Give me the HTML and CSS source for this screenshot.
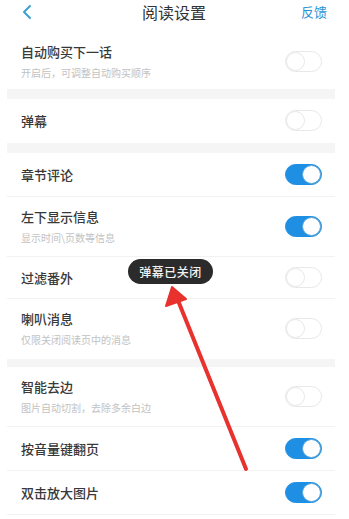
FILE: index.html
```html
<!DOCTYPE html>
<html lang="zh">
<head>
<meta charset="utf-8">
<link rel="stylesheet" href="styles.css">
</head>
<body>
<div class="page">
  <div class="header">
    <svg class="back" width="12" height="16" viewBox="0 0 12 16"><path d="M9 2 L3 8 L9 14" fill="none" stroke="#3aa0d9" stroke-width="2" stroke-linecap="round" stroke-linejoin="round"/></svg>
    <div class="title">阅读设置</div>
    <div class="feedback">反馈</div>
  </div>

  <div class="row two first">
    <div class="text"><div class="name">自动购买下一话</div><div class="sub">开启后，可调整自动购买顺序</div></div>
    <div class="toggle"></div>
  </div>
  <div class="band"></div>
  <div class="row">
    <div class="text"><div class="name">弹幕</div></div>
    <div class="toggle"></div>
  </div>
  <div class="band"></div>
  <div class="row line">
    <div class="text"><div class="name">章节评论</div></div>
    <div class="toggle on"></div>
  </div>
  <div class="row two line">
    <div class="text"><div class="name">左下显示信息</div><div class="sub">显示时间\页数等信息</div></div>
    <div class="toggle on"></div>
  </div>
  <div class="row short line">
    <div class="text"><div class="name">过滤番外</div></div>
    <div class="toggle"></div>
  </div>
  <div class="row two">
    <div class="text"><div class="name">喇叭消息</div><div class="sub">仅限关闭阅读页中的消息</div></div>
    <div class="toggle"></div>
  </div>
  <div class="band thin"></div>
  <div class="row two line">
    <div class="text"><div class="name">智能去边</div><div class="sub">图片自动切割，去除多余白边</div></div>
    <div class="toggle"></div>
  </div>
  <div class="row line">
    <div class="text"><div class="name">按音量键翻页</div></div>
    <div class="toggle on"></div>
  </div>
  <div class="row line">
    <div class="text"><div class="name">双击放大图片</div></div>
    <div class="toggle on"></div>
  </div>
</div>

<div class="toast">弹幕已关闭</div>
<svg class="arrow" width="349" height="519" viewBox="0 0 349 519">
  <line x1="246" y1="469" x2="177" y2="298" stroke="#e8322e" stroke-width="4" stroke-linecap="round"/>
  <polygon points="172,287 166,306 186,299" fill="#e8322e" stroke="#e8322e" stroke-width="2" stroke-linejoin="round"/>
</svg>
</body>
</html>
```

FILE: styles.css
```css
* { box-sizing: border-box; }
html, body { margin: 0; padding: 0; background: #fff; }
body {
  width: 349px;
  height: 519px;
  overflow: hidden;
  position: relative;
  font-family: "Noto Sans CJK SC", "Noto Sans", sans-serif;
}
.page {
  margin-left: 7px;
  width: 328px;
}
.header {
  height: 30px;
  display: flex;
  align-items: center;
  justify-content: space-between;
  padding: 0 8px 7px 14px;
}
.back { display: block; }
.title {
  font-size: 16px;
  color: #333;
  margin-left: 14px;
}
.feedback {
  font-size: 13px;
  color: #2a93d8;
}
.row {
  height: 44px;
  display: flex;
  align-items: center;
  justify-content: space-between;
  padding: 0 13px 0 14px;
  border-bottom: 1px solid transparent;
}
.row.line { border-bottom-color: #f2f2f2; }
.row.two { height: 60px; }
.row.short { height: 42px; }
.row.first { height: 59px; padding-top: 4px; }
.name {
  font-size: 13px;
  line-height: 18px;
  color: #383838;
  font-weight: 500;
}
.sub {
  font-size: 10px;
  line-height: 14px;
  color: #c2c2c2;
  margin-top: 5px;
}
.band {
  height: 10px;
  background: #f5f5f5;
}
.band.thin { height: 8px; }
.toggle {
  width: 37px;
  height: 21px;
  border-radius: 11px;
  border: 1px solid #e8e8e8;
  background: #fff;
  position: relative;
  flex: none;
}
.toggle::after {
  content: "";
  position: absolute;
  top: 0;
  left: 0;
  width: 19px;
  height: 19px;
  border-radius: 50%;
  border: 1px solid #e8e8e8;
  background: #fff;
  box-sizing: border-box;
}
.toggle.on {
  background: #1f8fe3;
  border-color: #1f8fe3;
}
.toggle.on::after {
  left: auto;
  right: 0;
  border-color: #5aa7d8;
}
.toast {
  position: absolute;
  left: 128px;
  top: 259px;
  width: 85px;
  height: 25px;
  border-radius: 13px;
  background: #2b2b2b;
  color: #f2f2f2;
  font-size: 12px;
  font-weight: 500;
  line-height: 25px;
  text-align: center;
  letter-spacing: 0.5px;
}
.arrow {
  position: absolute;
  left: 0;
  top: 0;
}
```
